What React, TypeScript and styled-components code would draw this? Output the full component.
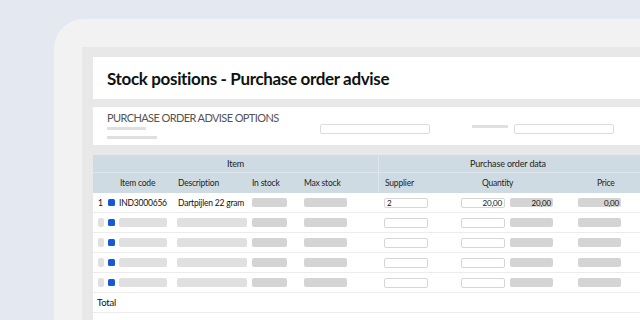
import styled, { createGlobalStyle } from 'styled-components';

const GlobalStyle = createGlobalStyle`
  html, body {
    margin: 0;
    padding: 0;
    background: #e4e9f1;
    font-family: Lato, 'Noto Sans', sans-serif;
  }
`;

const COLS = '10px 11px 58px 75px 52px 74px 83px 49px 68px 1fr';

const Page = styled.div`
  width: 640px;
  height: 320px;
  overflow: hidden;
  background: #e4e9f1;
  padding: 19px 0 0 54px;
  box-sizing: border-box;
`;

const Device = styled.div`
  width: 640px;
  height: 340px;
  background: #f2f2f2;
  border-top-left-radius: 30px;
  padding: 28px 0 0 28px;
  box-sizing: border-box;
`;

const Screen = styled.div`
  height: 100%;
  background: #e8e8e8;
  padding: 10px 0 0 11px;
  box-sizing: border-box;
  display: flex;
  flex-direction: column;
`;

const TitlePanel = styled.div`
  height: 42px;
  background: #fff;
  padding-left: 14px;
  display: flex;
  align-items: center;
`;

const Title = styled.h1`
  margin: 0;
  font-size: 17px;
  font-weight: 700;
  color: #111;
  letter-spacing: -0.35px;
`;

const OptionsPanel = styled.div`
  margin-top: 8px;
  height: 38px;
  background: #fff;
  padding: 4px 0 0 14px;
  box-sizing: border-box;
  display: flex;
  align-items: flex-start;
`;

const OptionsLeft = styled.div`
  width: 213px;
  display: flex;
  flex-direction: column;
`;

const OptionsTitle = styled.div`
  font-size: 11px;
  line-height: 14px;
  color: #555;
  letter-spacing: -0.6px;
  margin-bottom: 2px;
`;

const Bar = styled.div<{ $w: number; $h?: number; $dark?: boolean }>`
  width: ${(p) => p.$w}px;
  height: ${(p) => p.$h ?? 9}px;
  background: ${(p) => (p.$dark ? '#d4d4d4' : '#e0e0e0')};
  border-radius: ${(p) => ((p.$h ?? 9) > 4 ? 2 : 0)}px;
`;

const BarStack = styled.div`
  display: flex;
  flex-direction: column;
  gap: 6px;
`;

const OptionsFields = styled.div`
  margin-top: 13px;
  display: flex;
  align-items: flex-start;
`;

const Field = styled.div<{ $w: number }>`
  width: ${(p) => p.$w}px;
  height: 10px;
  border: 1px solid #dcdcdc;
  border-radius: 2px;
  background: #fff;
  box-sizing: border-box;
`;

const FieldLabel = styled(Bar)`
  margin: 1px 6px 0 42px;
`;

const Table = styled.div`
  margin-top: 10px;
  background: #fff;
  flex: 1;
`;

const GroupRow = styled.div`
  display: flex;
  height: 18px;
  background: #cfdbe3;
  border-bottom: 1px solid #dde6ec;
  box-sizing: border-box;
`;

const GroupCell = styled.div<{ $w: number; $divider?: boolean }>`
  width: ${(p) => p.$w}px;
  box-sizing: border-box;
  border-right: ${(p) => (p.$divider ? '1px solid #dde6ec' : 'none')};
  display: flex;
  align-items: center;
  justify-content: center;
  font-size: 9px;
  letter-spacing: -0.15px;
  color: #222;
`;

const Row = styled.div<{ $head?: boolean }>`
  display: grid;
  grid-template-columns: ${COLS};
  height: 20px;
  padding-left: 5px;
  align-items: center;
  box-sizing: border-box;
  background: ${(p) => (p.$head ? '#cfdbe3' : '#fff')};
  border-bottom: 1px solid ${(p) => (p.$head ? '#cfdbe3' : '#ececec')};
  font-size: 8.5px;
  letter-spacing: -0.2px;
  color: ${(p) => (p.$head ? '#222' : '#111')};
`;

const HeadCell = styled.div<{ $pad?: number; $span?: number; $divider?: boolean }>`
  height: 100%;
  display: flex;
  align-items: center;
  padding-left: ${(p) => p.$pad ?? 0}px;
  grid-column: span ${(p) => p.$span ?? 1};
  border-left: ${(p) => (p.$divider ? '1px solid #dde6ec' : 'none')};
  white-space: nowrap;
`;

const Cell = styled.div<{ $pad?: number }>`
  display: flex;
  align-items: center;
  padding-left: ${(p) => p.$pad ?? 0}px;
  white-space: nowrap;
`;

const Mark = styled.div`
  width: 7px;
  height: 7px;
  border-radius: 1.5px;
  background: #1658d8;
`;

const Input = styled.div<{ $w: number }>`
  width: ${(p) => p.$w}px;
  height: 10px;
  border: 1px solid #d6d6d6;
  border-radius: 2px;
  background: #fff;
  box-sizing: border-box;
  font-size: 8px;
  line-height: 8px;
  padding: 0 2px;
  display: flex;
  align-items: center;
  justify-content: flex-end;
  color: #111;
`;

const LeftInput = styled(Input)`
  justify-content: flex-start;
`;

const ValueBar = styled.div<{ $w: number }>`
  width: ${(p) => p.$w}px;
  height: 9px;
  background: #d4d4d4;
  border-radius: 2px;
  font-size: 8px;
  padding-right: 2px;
  box-sizing: border-box;
  display: flex;
  align-items: center;
  justify-content: flex-end;
  color: #111;
`;

const TotalRow = styled.div`
  height: 20px;
  padding-left: 4px;
  display: flex;
  align-items: center;
  font-size: 9.5px;
  letter-spacing: -0.2px;
  color: #111;
  border-bottom: 1px solid #ececec;
  box-sizing: border-box;
`;

function PlaceholderRow() {
  return (
    <Row>
      <Cell><Bar $w={6} /></Cell>
      <Cell><Mark /></Cell>
      <Cell><Bar $w={48} /></Cell>
      <Cell><Bar $w={70} /></Cell>
      <Cell><Bar $w={35} $dark /></Cell>
      <Cell><Bar $w={43} $dark /></Cell>
      <Cell $pad={6}><Input $w={44} /></Cell>
      <Cell><Input $w={44} /></Cell>
      <Cell><Bar $w={43} $dark /></Cell>
      <Cell><Bar $w={43} $dark /></Cell>
    </Row>
  );
}

export default function App() {
  return (
    <>
      <GlobalStyle />
      <Page>
        <Device>
          <Screen>
            <TitlePanel>
              <Title>Stock positions - Purchase order advise</Title>
            </TitlePanel>

            <OptionsPanel>
              <OptionsLeft>
                <OptionsTitle>PURCHASE ORDER ADVISE OPTIONS</OptionsTitle>
                <BarStack>
                  <Bar $w={39} $h={3} />
                  <Bar $w={50} $h={3} />
                </BarStack>
              </OptionsLeft>
              <OptionsFields>
                <Field $w={110} />
                <FieldLabel $w={36} $h={3} />
                <Field $w={100} />
              </OptionsFields>
            </OptionsPanel>

            <Table>
              <GroupRow>
                <GroupCell $w={286} $divider>Item</GroupCell>
                <GroupCell $w={258}>Purchase order data</GroupCell>
              </GroupRow>
              <Row $head>
                <HeadCell />
                <HeadCell />
                <HeadCell $pad={1}>Item code</HeadCell>
                <HeadCell $pad={1}>Description</HeadCell>
                <HeadCell>In stock</HeadCell>
                <HeadCell>Max stock</HeadCell>
                <HeadCell $pad={6} $divider>Supplier</HeadCell>
                <HeadCell $pad={21} $span={2}>Quantity</HeadCell>
                <HeadCell $pad={19}>Price</HeadCell>
              </Row>

              <Row>
                <Cell>1</Cell>
                <Cell><Mark /></Cell>
                <Cell>IND3000656</Cell>
                <Cell $pad={1}>Dartpijlen 22 gram</Cell>
                <Cell><Bar $w={35} $dark /></Cell>
                <Cell><Bar $w={43} $dark /></Cell>
                <Cell $pad={6}><LeftInput $w={44}>2</LeftInput></Cell>
                <Cell><Input $w={44}>20,00</Input></Cell>
                <Cell><ValueBar $w={43}>20,00</ValueBar></Cell>
                <Cell><ValueBar $w={43}>0,00</ValueBar></Cell>
              </Row>
              <PlaceholderRow />
              <PlaceholderRow />
              <PlaceholderRow />
              <PlaceholderRow />

              <TotalRow>Total</TotalRow>
            </Table>
          </Screen>
        </Device>
      </Page>
    </>
  );
}
